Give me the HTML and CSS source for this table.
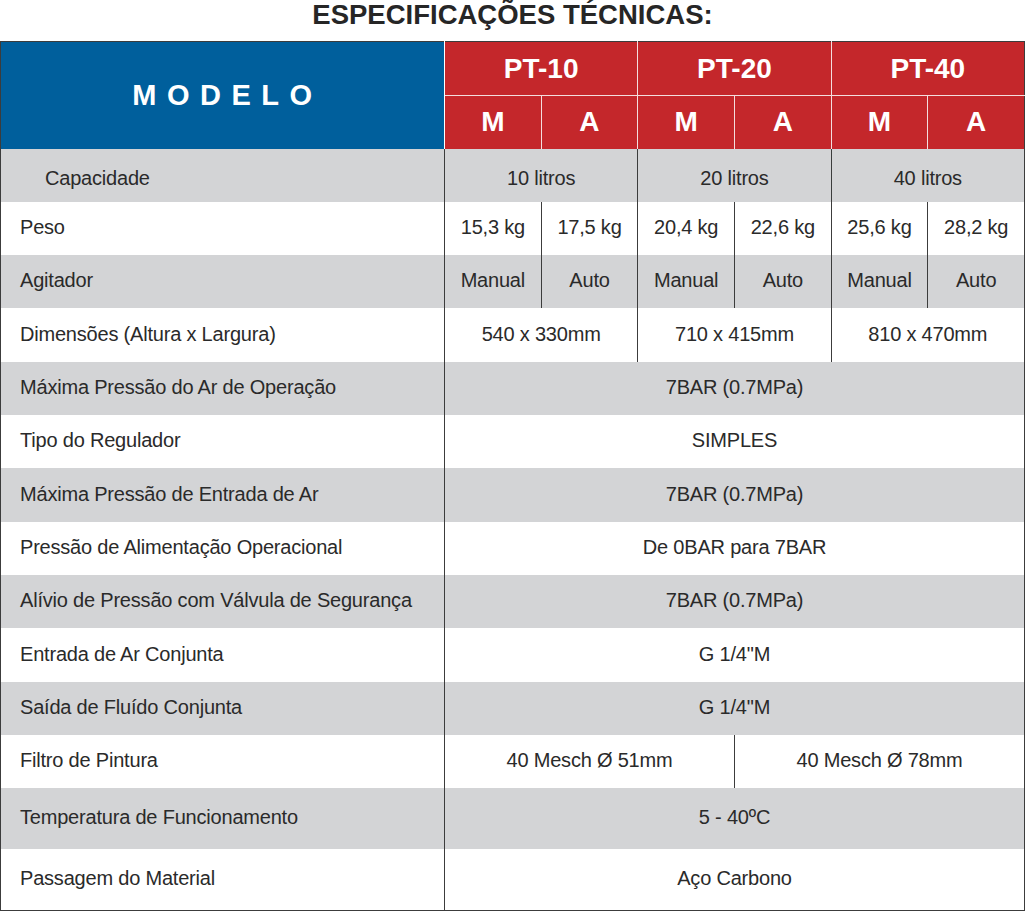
FILE: index.html
```html
<!DOCTYPE html>
<html lang="pt">
<head>
<meta charset="utf-8">
<title>Especificações Técnicas</title>
<link rel="stylesheet" href="styles.css">
</head>
<body>
<div class="page">
  <h1 class="title">ESPECIFICAÇÕES TÉCNICAS:</h1>
  <table class="spec">
    <colgroup>
      <col class="c-label">
      <col class="c-val"><col class="c-val"><col class="c-val"><col class="c-val"><col class="c-val"><col class="c-val">
    </colgroup>
    <thead>
      <tr class="h1">
        <th class="model" rowspan="2">MODELO</th>
        <th class="pt" colspan="2">PT-10</th>
        <th class="pt pt-next" colspan="2">PT-20</th>
        <th class="pt pt-next" colspan="2">PT-40</th>
      </tr>
      <tr class="h2">
        <th class="sub">M</th><th class="sub sub-next">A</th>
        <th class="sub sub-next">M</th><th class="sub sub-next">A</th>
        <th class="sub sub-next">M</th><th class="sub sub-next">A</th>
      </tr>
    </thead>
    <tbody>
      <tr class="gray">
        <td class="label indent">Capacidade</td>
        <td class="val low" colspan="2">10 litros</td>
        <td class="val low" colspan="2">20 litros</td>
        <td class="val low" colspan="2">40 litros</td>
      </tr>
      <tr>
        <td class="label">Peso</td>
        <td class="val">15,3 kg</td><td class="val">17,5 kg</td>
        <td class="val">20,4 kg</td><td class="val">22,6 kg</td>
        <td class="val">25,6 kg</td><td class="val">28,2 kg</td>
      </tr>
      <tr class="gray">
        <td class="label">Agitador</td>
        <td class="val">Manual</td><td class="val">Auto</td>
        <td class="val">Manual</td><td class="val">Auto</td>
        <td class="val">Manual</td><td class="val">Auto</td>
      </tr>
      <tr>
        <td class="label">Dimensões (Altura x Largura)</td>
        <td class="val" colspan="2">540 x 330mm</td>
        <td class="val" colspan="2">710 x 415mm</td>
        <td class="val" colspan="2">810 x 470mm</td>
      </tr>
      <tr class="gray">
        <td class="label">Máxima Pressão do Ar de Operação</td>
        <td class="val" colspan="6">7BAR (0.7MPa)</td>
      </tr>
      <tr>
        <td class="label">Tipo do Regulador</td>
        <td class="val" colspan="6">SIMPLES</td>
      </tr>
      <tr class="gray">
        <td class="label">Máxima Pressão de Entrada de Ar</td>
        <td class="val" colspan="6">7BAR (0.7MPa)</td>
      </tr>
      <tr>
        <td class="label">Pressão de Alimentação Operacional</td>
        <td class="val" colspan="6">De 0BAR para 7BAR</td>
      </tr>
      <tr class="gray">
        <td class="label">Alívio de Pressão com Válvula de Segurança</td>
        <td class="val" colspan="6">7BAR (0.7MPa)</td>
      </tr>
      <tr>
        <td class="label">Entrada de Ar Conjunta</td>
        <td class="val" colspan="6">G 1/4"M</td>
      </tr>
      <tr class="gray">
        <td class="label">Saída de Fluído Conjunta</td>
        <td class="val" colspan="6">G 1/4"M</td>
      </tr>
      <tr>
        <td class="label">Filtro de Pintura</td>
        <td class="val" colspan="3">40 Mesch Ø 51mm</td>
        <td class="val" colspan="3">40 Mesch Ø 78mm</td>
      </tr>
      <tr class="gray tall">
        <td class="label">Temperatura de Funcionamento</td>
        <td class="val" colspan="6">5 - 40ºC</td>
      </tr>
      <tr class="tall">
        <td class="label">Passagem do Material</td>
        <td class="val" colspan="6">Aço Carbono</td>
      </tr>
    </tbody>
  </table>
</div>
</body>
</html>
```

FILE: styles.css
```css
html, body {
  margin: 0;
  padding: 0;
  background: #ffffff;
}

.page {
  width: 1025px;
  font-family: "Liberation Sans", Arial, sans-serif;
  color: #2a2a2a;
}

.title {
  margin: 0 0 11px 0;
  font-size: 27.5px;
  line-height: 30px;
  font-weight: bold;
  text-align: center;
  color: #262626;
}

.spec {
  width: 1025px;
  table-layout: fixed;
  border-collapse: collapse;
  border: 1px solid #3c3c3c;
}

.c-label {
  width: 444px;
}

.spec th {
  padding: 0;
  font-weight: bold;
  color: #ffffff;
  text-align: center;
  vertical-align: middle;
}

.h1 {
  height: 54px;
}

.h2 {
  height: 53px;
}

.model {
  background: #005f9c;
  font-size: 29px;
  letter-spacing: 10.5px;
  padding-left: 10px !important;
  border-right: 1px solid #ffffff;
}

.pt {
  background: #c4272b;
  font-size: 28px;
  border-bottom: 1px solid #f4dede;
}

.pt-next {
  border-left: 1px solid #f4dede;
}

.sub {
  background: #c4272b;
  font-size: 28px;
}

.sub-next {
  border-left: 1px solid #f4dede;
}

.spec tbody tr {
  height: 53.33px;
}

.spec tbody tr.tall {
  height: 61px;
}

.spec tbody tr.gray {
  background: #d3d4d6;
}

.spec td {
  padding: 0;
  font-size: 20px;
  letter-spacing: -0.2px;
  vertical-align: middle;
  color: #2a2a2a;
}

.label {
  text-align: left;
  padding-left: 19px !important;
  padding-bottom: 2px !important;
}

.label.indent {
  padding-left: 44px !important;
  padding-top: 7px !important;
  padding-bottom: 0 !important;
}

.val {
  text-align: center;
  border-left: 1px solid #3c3c3c;
  padding-bottom: 2px !important;
}

.val.low {
  padding-top: 7px !important;
  padding-bottom: 0 !important;
}
```
